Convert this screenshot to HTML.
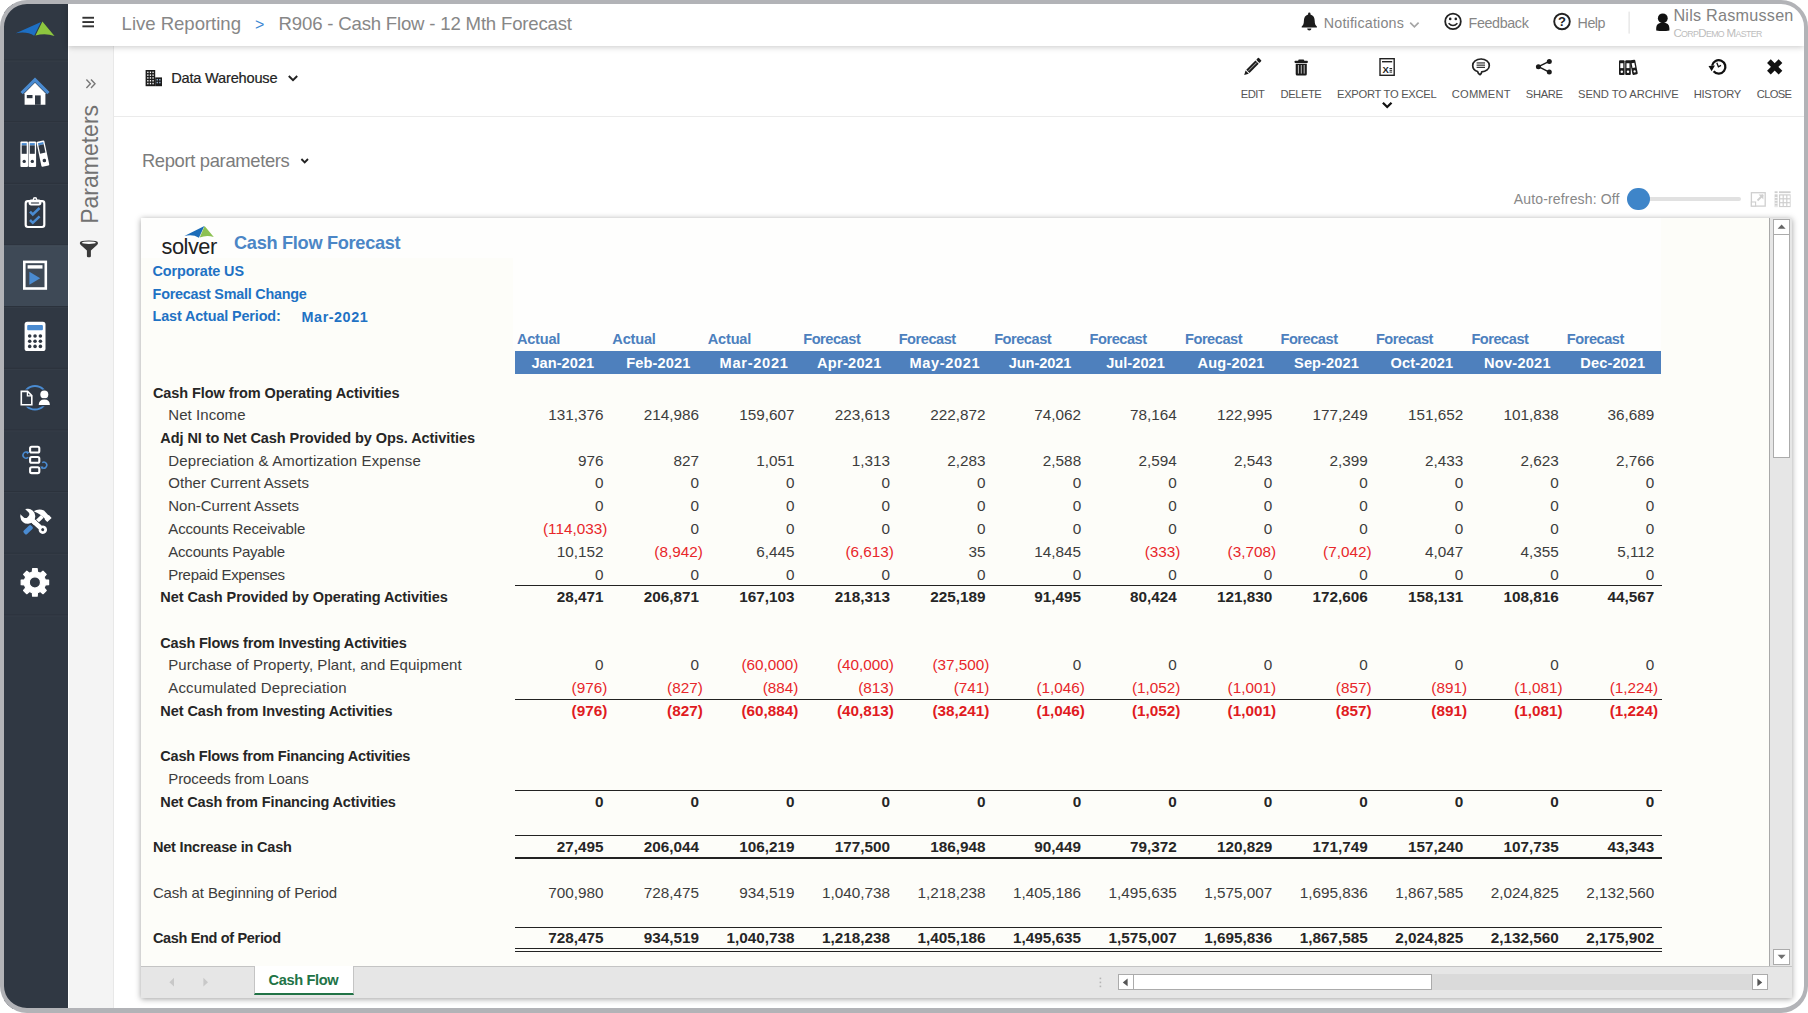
<!DOCTYPE html>
<html lang="en"><head><meta charset="utf-8"><title>R906 - Cash Flow - 12 Mth Forecast</title>
<style>
html,body{margin:0;padding:0;background:#fff;overflow:hidden;}
#page{position:relative;width:1808px;height:1013px;overflow:hidden;background:#fff;font-family:'Liberation Sans',sans-serif;}
#page div,#page svg{position:absolute;}
.t{white-space:nowrap;z-index:5;}
#frame{left:0;top:0;width:1808px;height:1013px;box-sizing:border-box;border:4px solid #b2b3b7;border-bottom-width:5px;border-right-width:4.5px;border-radius:27px;box-shadow:0 0 0 40px #fff;z-index:50;pointer-events:none;}
#side{left:4px;top:4px;width:64.2px;height:1005px;background:#303843;z-index:3;}
#active{left:4px;top:245.3px;width:64.2px;height:60.9px;background:#3e4956;z-index:3;}
#topbar{left:68.4px;top:4px;width:1736px;height:42px;background:#fff;box-shadow:0 1px 6px rgba(0,0,0,.22);z-index:4;}
#params{left:69.4px;top:46px;width:43.6px;height:963px;background:#f4f4f4;border-right:1px solid #e8e8e8;z-index:2;}
#tbline{left:113px;top:116px;width:1691px;height:1px;background:#ebebeb;}
#card{left:140.5px;top:217.5px;width:1651px;height:780.5px;background:#fdfdf9;box-shadow:0 1px 6px rgba(0,0,0,.38);z-index:1;}
#hdr{left:515.4px;top:350.7px;width:1145.4px;height:23.2px;background:#4e80bd;z-index:2;}
.ln{background:#222;height:1px;left:515px;width:1147px;z-index:2;}
#vsb{left:1768.5px;top:217.5px;width:23px;height:748.5px;background:#e6e6e6;border-left:1.5px solid #a9a9a9;box-sizing:border-box;z-index:2;}
#botbar{left:140.5px;top:965.5px;width:1651px;height:32.5px;background:#e6e6e6;border-top:1px solid #c4c4c4;box-sizing:border-box;z-index:2;}
.sbtn{background:#fff;border:1px solid #ababab;box-sizing:border-box;z-index:3;}
#tab{left:253.6px;top:965.5px;width:100.8px;height:29px;background:#fff;border-left:1px solid #c4c4c4;border-right:1px solid #c4c4c4;border-bottom:2.4px solid #217346;box-sizing:border-box;z-index:3;}
#hsb{left:1117.5px;top:974.3px;width:650px;height:16px;background:#dadada;z-index:3;}
#ptext{left:0;top:0;transform-origin:0 0;white-space:nowrap;color:#727272;z-index:5;}
#icons{left:0;top:0;z-index:6;}
#track{left:1638px;top:196.8px;width:102.5px;height:4.6px;border-radius:2.3px;background:#e1e1e1;}
#knob{left:1627.3px;top:187.7px;width:22.6px;height:22.6px;border-radius:50%;background:#3e85c9;}

</style></head>
<body>
<div id="page">
<div id="side"></div><div id="active"></div><div id="topbar"></div><div id="params"></div><div id="tbline"></div>
<div id="card"></div><div style="left:140.5px;top:217.5px;width:1520px;height:40px;background:#fefefd;z-index:1"></div><div style="left:513px;top:257px;width:1148px;height:93px;background:#fefefd;z-index:1"></div><div id="hdr"></div>
<div class="ln" style="top:585.2px;height:1px"></div>
<div class="ln" style="top:698.9px;height:1px"></div>
<div class="ln" style="top:789.9px;height:1px"></div>
<div class="ln" style="top:835.4px;height:1px"></div>
<div class="ln" style="top:856.9px;height:2.3px"></div>
<div class="ln" style="top:926.5px;height:1px"></div>
<div class="ln" style="top:948.3px;height:1.2px"></div>
<div class="ln" style="top:950.5px;height:1.5px"></div>
<div id="vsb"></div><div id="botbar"></div><div id="tab"></div><div id="hsb"></div>
<div class="sbtn" style="left:1773.3px;top:219.2px;width:16.6px;height:15.6px"></div>
<div class="sbtn" style="left:1773.3px;top:234.8px;width:16.6px;height:223.2px;border-top:none"></div>
<div class="sbtn" style="left:1773.3px;top:948.6px;width:16.6px;height:16px"></div>
<div class="sbtn" style="left:1117.5px;top:974.3px;width:16px;height:16px"></div>
<div class="sbtn" style="left:1133.5px;top:974.3px;width:298.5px;height:16px;border-left:none"></div>
<div class="sbtn" style="left:1751.5px;top:974.3px;width:16px;height:16px"></div>
<div id="track"></div><div id="knob"></div>
<div id="ptext" style="font-size:23px;line-height:26px;transform:translate(77.4px,223.8px) rotate(-90deg);">Parameters</div>
<svg id="icons" width="1808" height="1013" viewBox="0 0 1808 1013">
<rect x="4" y="59.5" width="64" height="1" fill="#000" opacity=".1"/><rect x="4" y="60.5" width="64" height="1" fill="#fff" opacity=".03"/>
<rect x="4" y="121.2" width="64" height="1" fill="#000" opacity=".1"/><rect x="4" y="122.2" width="64" height="1" fill="#fff" opacity=".03"/>
<rect x="4" y="182.8" width="64" height="1" fill="#000" opacity=".1"/><rect x="4" y="183.8" width="64" height="1" fill="#fff" opacity=".03"/>
<rect x="4" y="244.4" width="64" height="1" fill="#000" opacity=".1"/><rect x="4" y="245.4" width="64" height="1" fill="#fff" opacity=".03"/>
<rect x="4" y="306.1" width="64" height="1" fill="#000" opacity=".1"/><rect x="4" y="307.1" width="64" height="1" fill="#fff" opacity=".03"/>
<rect x="4" y="367.8" width="64" height="1" fill="#000" opacity=".1"/><rect x="4" y="368.8" width="64" height="1" fill="#fff" opacity=".03"/>
<rect x="4" y="429.4" width="64" height="1" fill="#000" opacity=".1"/><rect x="4" y="430.4" width="64" height="1" fill="#fff" opacity=".03"/>
<rect x="4" y="491.1" width="64" height="1" fill="#000" opacity=".1"/><rect x="4" y="492.1" width="64" height="1" fill="#fff" opacity=".03"/>
<rect x="4" y="552.7" width="64" height="1" fill="#000" opacity=".1"/><rect x="4" y="553.7" width="64" height="1" fill="#fff" opacity=".03"/>
<rect x="4" y="614.4" width="64" height="1" fill="#000" opacity=".1"/><rect x="4" y="615.4" width="64" height="1" fill="#fff" opacity=".03"/>
<path d="M15.8,33.2 L41,22 L34.2,35.8 Q27,31 15.8,33.2Z" fill="#1d6fc4"/>
<path d="M42.4,21.5 L54.5,36 Q45,32.8 35.5,35.6Z" fill="#8dc63f"/>
<polygon points="24.6,104.7 24.6,93.2 35,82.8 45.4,93.2 45.4,104.7" fill="#fff"/>
<rect x="26.8" y="95" width="5.7" height="3.2" fill="#303843"/><rect x="35" y="95.4" width="5.7" height="9.4" fill="#303843"/>
<polyline points="21.6,93.2 35,79.8 48.4,93.2" fill="none" stroke="#4a8bd1" stroke-width="3.2"/>
<g ><rect x="20.4" y="141.5" width="7.6" height="25.5" rx="1" fill="#fff"/><rect x="21.7" y="143.1" width="5.0" height="2.29" fill="#4a8bd1"/><rect x="21.7" y="145.39" width="5.0" height="8.42" fill="#303843"/><circle cx="24.2" cy="161.39" r="1.67" fill="#303843"/></g>
<g ><rect x="28.5" y="141.5" width="7.6" height="25.5" rx="1" fill="#fff"/><rect x="29.8" y="143.1" width="5.0" height="2.29" fill="#4a8bd1"/><rect x="29.8" y="145.39" width="5.0" height="8.42" fill="#303843"/><circle cx="32.3" cy="161.39" r="1.67" fill="#303843"/></g>
<g transform="rotate(-12 42.4 166.7) translate(3.2 0)"><rect x="38.4" y="141.2" width="8" height="25.5" rx="1" fill="#fff"/><rect x="39.699999999999996" y="142.79999999999998" width="5.4" height="2.29" fill="#4a8bd1"/><rect x="39.699999999999996" y="145.09" width="5.4" height="8.42" fill="#303843"/><circle cx="42.4" cy="161.09" r="1.76" fill="#303843"/></g>
<rect x="25.7" y="201.2" width="18.6" height="25.8" rx="2.2" fill="none" stroke="#fff" stroke-width="2.2"/>
<rect x="28.6" y="199.6" width="12.8" height="5.8" rx="2.6" fill="#fff"/><circle cx="35" cy="199.4" r="2.3" fill="#fff"/><circle cx="35" cy="199.2" r=".8" fill="#303843"/>
<rect x="30.8" y="202.3" width="8.4" height="1.5" rx=".7" fill="#303843" opacity=".75"/>
<polyline points="30,211.6 32.8,214.4 39.6,208" fill="none" stroke="#4a8bd1" stroke-width="2.5"/>
<polyline points="30,220 32.8,222.8 39.6,216.4" fill="none" stroke="#4a8bd1" stroke-width="2.5"/>
<rect x="24.3" y="261.9" width="21.5" height="26.6" fill="none" stroke="#fff" stroke-width="2.6"/>
<rect x="27.6" y="265.2" width="14.9" height="3.4" fill="#fff"/><polygon points="29.4,271.8 40.2,278.3 29.4,284.8" fill="#4a8bd1"/>
<rect x="24.6" y="321.8" width="20.9" height="29.2" rx="2.6" fill="#fff"/><rect x="27.2" y="325" width="15.7" height="5.2" rx="1" fill="#4a8bd1"/>
<circle cx="29.7" cy="336" r="1.8" fill="#303843"/>
<circle cx="29.7" cy="341.2" r="1.8" fill="#303843"/>
<circle cx="29.7" cy="346.4" r="1.8" fill="#303843"/>
<circle cx="35.05" cy="336" r="1.8" fill="#303843"/>
<circle cx="35.05" cy="341.2" r="1.8" fill="#303843"/>
<circle cx="35.05" cy="346.4" r="1.8" fill="#303843"/>
<circle cx="40.4" cy="336" r="1.8" fill="#303843"/>
<circle cx="40.4" cy="341.2" r="1.8" fill="#303843"/>
<circle cx="40.4" cy="346.4" r="1.8" fill="#303843"/>
<circle cx="35" cy="397.8" r="11.8" fill="none" stroke="#4a8bd1" stroke-width="2"/>
<path d="M21.3,391.4 h6.3 l4.2,4.2 v9.2 h-10.5z" fill="#303843" stroke="#303843" stroke-width="4"/>
<path d="M21.3,391.4 h6.3 l4.2,4.2 v9.2 h-10.5z" fill="#303843" stroke="#fff" stroke-width="1.6"/><path d="M27.4,391.6 v4.2 h4.2" fill="none" stroke="#fff" stroke-width="1.3"/>
<g stroke="#303843" stroke-width="2.4" paint-order="stroke" fill="#fff"><circle cx="44.3" cy="394.5" r="4"/><path d="M38.7,405 q0,-5.6 5.6,-5.6 q5.6,0 5.6,5.6z"/></g>
<rect x="30.1" y="446.7" width="9.2" height="5.8" rx="1.6" fill="none" stroke="#fff" stroke-width="2.1"/>
<rect x="30.1" y="457" width="9.2" height="5.8" rx="1.6" fill="none" stroke="#fff" stroke-width="2.1"/>
<rect x="30.1" y="467.3" width="9.2" height="5.8" rx="1.6" fill="none" stroke="#fff" stroke-width="2.1"/>
<path d="M27.6,452.6 a3,3 0 1 0 0.6,4.6" fill="none" stroke="#4a8bd1" stroke-width="1.5"/><polygon points="26.4,451 29.6,452.2 27,454.4" fill="#4a8bd1"/>
<path d="M42.2,462.6 a3,3 0 1 1 -0.4,4.8" fill="none" stroke="#4a8bd1" stroke-width="1.5"/><polygon points="40.2,466.6 43.4,466.4 42.2,469.6" fill="#4a8bd1"/>
<g transform="translate(41.6,517) rotate(136.4)"><rect x="-1" y="-1.9" width="9" height="3.8" fill="#fff"/><rect x="13.4" y="-2.4" width="10.4" height="4.8" rx="1.6" fill="#4a8bd1"/><path d="M-6.6,-7.6 L-0.6,-7.6 L-0.6,-4.2 L-1.2,-3 L-0.6,2.5 Q0,6.5 2,9.8 Q-4.4,8.4 -6.2,3 L-6.2,-3 L-6.6,-4Z" fill="#fff"/></g>
<g transform="translate(27.8,516.3) rotate(41.9)"><g fill="#fff" stroke="#303843" stroke-width="1.3" paint-order="stroke"><path d="M0,-2.4 H16.75 A4.2,4.2 0 1 1 16.75,2.4 H0Z"/><circle cx="0" cy="0" r="7.5"/></g><rect x="0" y="-2.3" width="10" height="4.6" fill="#fff"/><rect x="-11" y="-3.5" width="11.4" height="7" rx="3" fill="#303843"/><circle cx="20" cy="0" r="1.5" fill="#303843"/></g>
<path d="M45.28,579.82 L48.61,580.12 L48.61,584.68 L45.28,584.98 L44.07,587.92 L46.21,590.48 L42.98,593.71 L40.42,591.57 L37.48,592.78 L37.18,596.11 L32.62,596.11 L32.32,592.78 L29.38,591.57 L26.82,593.71 L23.59,590.48 L25.73,587.92 L24.52,584.98 L21.19,584.68 L21.19,580.12 L24.52,579.82 L25.73,576.88 L23.59,574.32 L26.82,571.09 L29.38,573.23 L32.32,572.02 L32.62,568.69 L37.18,568.69 L37.48,572.02 L40.42,573.23 L42.98,571.09 L46.21,574.32 L44.07,576.88Z M40.50,582.40 A5.6,5.6 0 1 0 29.30,582.40 A5.6,5.6 0 1 0 40.50,582.40Z" fill="#fff" fill-rule="evenodd" stroke="#fff" stroke-width="1.2" stroke-linejoin="round"/>
<rect x="82.4" y="16.8" width="11.6" height="1.9" fill="#333"/>
<rect x="82.4" y="21.1" width="11.6" height="1.9" fill="#333"/>
<rect x="82.4" y="25.4" width="11.6" height="1.9" fill="#333"/>
<path d="M1309.3,12.6 a1.2,1.2 0 0 1 1.2,1.2 v.6 c3,.8 4.2,3.4 4.2,6.4 c0,3.2 .8,4.6 2.2,5.8 v.9 h-15.2 v-.9 c1.4,-1.2 2.200,-2.6 2.200,-5.800 c0,-3 1.200,-5.600 4.200,-6.400 v-.6 a1.2,1.2 0 0 1 1.200,-1.200z" fill="#1b1b1b"/><path d="M1307.2,28.400 h4.200 a2.100,2.100 0 0 1 -4.200,0z" fill="#1b1b1b"/>
<polyline points="1410.2,22.700 1414.400,26.800 1418.600,22.700" fill="none" stroke="#a5a5a5" stroke-width="1.7"/>
<circle cx="1453" cy="21.400" r="7.8" fill="none" stroke="#222" stroke-width="1.8"/><circle cx="1450.200" cy="18.900" r="1.300" fill="#222"/><circle cx="1455.8" cy="18.900" r="1.300" fill="#222"/><path d="M1448.600,23.200 q4.400,4.600 8.800,0" fill="none" stroke="#222" stroke-width="1.5"/>
<circle cx="1562" cy="21.500" r="7.8" fill="none" stroke="#222" stroke-width="1.9"/><text x="1562" y="26.200" text-anchor="middle" font-family="Liberation Sans, sans-serif" font-weight="700" font-size="13" fill="#222">?</text>
<rect x="1628.6" y="11.6" width="1" height="22" fill="#dcdcdc"/>
<circle cx="1662.8" cy="18.300" r="4.900" fill="#111"/><path d="M1656.200,30.500 v-2.600 q0,-5.200 6.600,-5.200 q6.600,0 6.600,5.200 v2.600 q-6.600,1.200 -13.200,0z" fill="#111"/>
<polyline points="86.4,79.6 90.4,83.8 86.4,88" fill="none" stroke="#777" stroke-width="1.4"/><polyline points="91,79.6 95,83.8 91,88" fill="none" stroke="#777" stroke-width="1.4"/>
<path d="M79.800,243 q0,-2.400 9.100,-2.400 q9.100,0 9.100,2.400 q0,1.200 -1,2 l-6.100,5.600 v5.400 q0,1.200 -1.200,1.200 h-1.600 q-1.200,0 -1.200,-1.200 v-5.400 l-6.100,-5.600 q-1,-.8 -1,-2z" fill="#3a3a3a"/><ellipse cx="88.9" cy="242.700" rx="7" ry="1.300" fill="#fff"/>
<rect x="145.6" y="70" width="9.6" height="16.2" fill="#1b1b1b"/><rect x="155.2" y="77.400" width="6.800" height="8.800" fill="#1b1b1b"/>
<rect x="147.2" y="71.6" width="1.3" height="1.5" fill="#fff"/>
<rect x="147.2" y="74.4" width="1.3" height="1.5" fill="#fff"/>
<rect x="147.2" y="77.2" width="1.3" height="1.5" fill="#fff"/>
<rect x="147.2" y="80" width="1.3" height="1.5" fill="#fff"/>
<rect x="147.2" y="82.8" width="1.3" height="1.5" fill="#fff"/>
<rect x="149.8" y="71.6" width="1.3" height="1.5" fill="#fff"/>
<rect x="149.8" y="74.4" width="1.3" height="1.5" fill="#fff"/>
<rect x="149.8" y="77.2" width="1.3" height="1.5" fill="#fff"/>
<rect x="149.8" y="80" width="1.3" height="1.5" fill="#fff"/>
<rect x="149.8" y="82.8" width="1.3" height="1.5" fill="#fff"/>
<rect x="152.4" y="71.6" width="1.3" height="1.5" fill="#fff"/>
<rect x="152.4" y="74.4" width="1.3" height="1.5" fill="#fff"/>
<rect x="152.4" y="77.2" width="1.3" height="1.5" fill="#fff"/>
<rect x="152.4" y="80" width="1.3" height="1.5" fill="#fff"/>
<rect x="152.4" y="82.8" width="1.3" height="1.5" fill="#fff"/>
<rect x="156.6" y="79" width="1.3" height="1.5" fill="#9db8d6"/>
<rect x="156.6" y="81.8" width="1.3" height="1.5" fill="#9db8d6"/>
<rect x="159.2" y="79" width="1.3" height="1.5" fill="#9db8d6"/>
<rect x="159.2" y="81.8" width="1.3" height="1.5" fill="#9db8d6"/>
<polyline points="288.8,76 293,80.200 297.200,76" fill="none" stroke="#222" stroke-width="2"/>
<polyline points="301.4,159 304.7,162.300 308,159" fill="none" stroke="#222" stroke-width="1.9"/>
<g transform="translate(1244.2,75) rotate(-45)"><polygon points="0,0 4.200,-2.300 4.200,2.300" fill="#1b1b1b"/><rect x="5.200" y="-2.300" width="13" height="4.600" fill="#1b1b1b"/><rect x="6" y="-.5" width="11.400" height="1" fill="#fff" opacity=".55"/><rect x="19.200" y="-2.300" width="3.200" height="4.600" rx=".8" fill="#1b1b1b"/></g>
<rect x="1294.7" y="60.800" width="13" height="2.300" rx=".5" fill="#1b1b1b"/><rect x="1298.2" y="59.600" width="6" height="2.200" rx="1" fill="#1b1b1b"/><path d="M1295.7,63.800 h11.100 v10.200 q0,1.500 -1.500,1.500 h-8.100 q-1.500,0 -1.500,-1.500z" fill="#1b1b1b"/>
<rect x="1297.9" y="65" width=".9" height="8.600" fill="#fff" opacity=".8"/>
<rect x="1300.8" y="65" width=".9" height="8.600" fill="#fff" opacity=".8"/>
<rect x="1303.7" y="65" width=".9" height="8.600" fill="#fff" opacity=".8"/>
<rect x="1380" y="58.700" width="14.200" height="16.600" fill="none" stroke="#222" stroke-width="1.4"/><rect x="1382" y="61" width="10.200" height="1.400" fill="#222"/>
<text x="1382.4" y="72.800" font-family="Liberation Sans, sans-serif" font-weight="700" font-size="9.500" fill="#222">X</text><rect x="1389.5" y="68" width="2.600" height="1" fill="#222"/><rect x="1389.5" y="69.800" width="2.600" height="1" fill="#222"/><rect x="1389.5" y="71.600" width="2.600" height="1" fill="#222"/>
<polyline points="1382.9,102.800 1387.200,107 1391.500,102.800" fill="none" stroke="#111" stroke-width="2.300"/>
<path d="M1481,59 c4.700,0 8.300,2.900 8.300,6.400 c0,3.500 -3.300,6.200 -7.600,6.400 c0,1.300 -.6,2.200 -1.700,2.900 c-1,-.4 -2,-1.400 -2.400,-3.200 c-2.900,-1 -4.900,-3.400 -4.900,-6.100 c0,-3.500 3.600,-6.400 8.300,-6.400z" fill="none" stroke="#222" stroke-width="1.7" stroke-linejoin="round"/>
<rect x="1476.6" y="62.4" width="8.400" height="1.100" fill="#222"/>
<rect x="1476.6" y="64.6" width="8.400" height="1.100" fill="#222"/>
<rect x="1476.6" y="66.8" width="8.400" height="1.100" fill="#222"/>
<g fill="#1b1b1b" stroke="#1b1b1b"><line x1="1538.5" y1="66.700" x2="1549.200" y2="61.400" stroke-width="1.500"/><line x1="1538.5" y1="66.700" x2="1549.200" y2="72.100" stroke-width="1.500"/><circle cx="1538.4" cy="66.700" r="2.500" stroke="none"/><circle cx="1549.3" cy="61.500" r="2.500" stroke="none"/><circle cx="1549.3" cy="72" r="2.500" stroke="none"/></g>
<g ><rect x="1619" y="60.3" width="5.6" height="14.8" rx="1" fill="#1b1b1b"/><rect x="1620.3" y="61.9" width="2.9999999999999996" height="1.33" fill="#1b1b1b"/><rect x="1620.3" y="63.23" width="2.9999999999999996" height="4.88" fill="#fff"/><circle cx="1621.8" cy="71.84" r="1.23" fill="#fff"/></g>
<g ><rect x="1625.2" y="60.3" width="5.6" height="14.8" rx="1" fill="#1b1b1b"/><rect x="1626.5" y="61.9" width="2.9999999999999996" height="1.33" fill="#1b1b1b"/><rect x="1626.5" y="63.23" width="2.9999999999999996" height="4.88" fill="#fff"/><circle cx="1628.0" cy="71.84" r="1.23" fill="#fff"/></g>
<g transform="rotate(-11 1634 75) translate(2 0)"><rect x="1630.6" y="60" width="5.4" height="14.8" rx="1" fill="#1b1b1b"/><rect x="1631.8999999999999" y="61.6" width="2.8000000000000003" height="1.33" fill="#1b1b1b"/><rect x="1631.8999999999999" y="62.93" width="2.8000000000000003" height="4.88" fill="#fff"/><circle cx="1633.3" cy="71.54" r="1.19" fill="#fff"/></g>
<path d="M1713.6,71.200 a6.700,6.700 0 1 0 -1.500,-5.600" fill="none" stroke="#111" stroke-width="2.300"/><polygon points="1708.5,65.900 1715,65.400 1711.600,71.200" fill="#111"/><polyline points="1716.8,62.800 1718.4,66.800 1721,65.400" fill="none" stroke="#111" stroke-width="1.300"/>
<line x1="1768.9" y1="61.100" x2="1780.500" y2="72.700" stroke="#111" stroke-width="5.2"/><line x1="1780.500" y1="61.100" x2="1768.9" y2="72.700" stroke="#111" stroke-width="5.2"/>
<rect x="1751.4" y="192.700" width="13.800" height="13.400" fill="none" stroke="#cfcfcf" stroke-width="1.300"/><rect x="1751.4" y="202" width="4.200" height="4.100" fill="#fff" stroke="#cfcfcf" stroke-width="1.100"/><line x1="1757.5" y1="200.500" x2="1763" y2="195" stroke="#cfcfcf" stroke-width="1.800"/><polygon points="1758.6,194.600 1763.4,194.600 1763.4,199.400" fill="#cfcfcf"/>
<g fill="#cfcfcf"><rect x="1774.6" y="191.300" width="3" height="1.800"/><rect x="1779" y="191.300" width="11.600" height="1.800"/><rect x="1774.6" y="194.300" width="3" height="12.800"/><rect x="1779" y="194.300" width="11.600" height="12.800"/></g>
<rect x="1780.2" y="195.5" width="2.400" height="2.700" fill="#fff"/>
<rect x="1780.2" y="199.4" width="2.400" height="2.700" fill="#fff"/>
<rect x="1780.2" y="203.3" width="2.400" height="2.700" fill="#fff"/>
<rect x="1783.8" y="195.5" width="2.400" height="2.700" fill="#fff"/>
<rect x="1783.8" y="199.4" width="2.400" height="2.700" fill="#fff"/>
<rect x="1783.8" y="203.3" width="2.400" height="2.700" fill="#fff"/>
<rect x="1787.4" y="195.5" width="2.400" height="2.700" fill="#fff"/>
<rect x="1787.4" y="199.4" width="2.400" height="2.700" fill="#fff"/>
<rect x="1787.4" y="203.3" width="2.400" height="2.700" fill="#fff"/>
<rect x="1774.6" y="197.0" width="3" height=".8" fill="#fff"/>
<rect x="1774.6" y="199.9" width="3" height=".8" fill="#fff"/>
<rect x="1774.6" y="202.8" width="3" height=".8" fill="#fff"/>
<rect x="1774.6" y="205.7" width="3" height=".8" fill="#fff"/>
<path d="M184.4,236.100 L204.400,226.100 L198.900,237.700 Q192.500,234 184.400,236.100Z" fill="#1b6cb8"/><path d="M204.600,226 L213.800,237 Q206.600,234.700 199.700,237.500Z" fill="#8cc152"/>
<polygon points="1777.6,228.800 1785.600,228.800 1781.600,224.600" fill="#666"/>
<polygon points="1777.6,954.800 1785.600,954.800 1781.600,959" fill="#707070"/>
<polygon points="1127.6,978.500 1127.6,986.300 1122.800,982.400" fill="#555"/>
<polygon points="1757.4,978.500 1757.400,986.300 1762.200,982.400" fill="#555"/>
<polygon points="174,977.800 174,986.600 169.400,982.200" fill="#c8c8c8"/><polygon points="203.400,977.800 203.400,986.600 208,982.200" fill="#c8c8c8"/>
<rect x="1099.6" y="977.6" width="1.6" height="1.6" fill="#b5b5b5"/>
<rect x="1099.6" y="981.6" width="1.6" height="1.6" fill="#b5b5b5"/>
<rect x="1099.6" y="985.6" width="1.6" height="1.6" fill="#b5b5b5"/>
</svg>
<div class="t" style="left:121.60px;top:12px;font-size:18.6px;line-height:24px;color:#878787;letter-spacing:-0.039px;">Live Reporting</div>
<div class="t" style="left:255.03px;top:14px;font-size:16px;line-height:21px;color:#3b87d3;">&gt;</div>
<div class="t" style="left:278.60px;top:12px;font-size:18.6px;line-height:24px;color:#878787;letter-spacing:-0.190px;">R906 - Cash Flow - 12 Mth Forecast</div>
<div class="t" style="left:1323.80px;top:14px;font-size:14.3px;line-height:19px;color:#868686;letter-spacing:0.177px;">Notifications</div>
<div class="t" style="left:1468.50px;top:14px;font-size:14.3px;line-height:19px;color:#868686;letter-spacing:-0.357px;">Feedback</div>
<div class="t" style="left:1577.60px;top:14px;font-size:14.3px;line-height:19px;color:#868686;letter-spacing:-0.502px;">Help</div>
<div class="t" style="left:1673.40px;top:5px;font-size:16.2px;line-height:21px;color:#828282;letter-spacing:0.234px;">Nils Rasmussen</div>
<div class="t" style="left:1673.40px;top:26px;font-size:11.5px;line-height:15px;color:#bdbdbd;letter-spacing:-0.634px;">C<span style="font-size:8.8px">ORP</span>D<span style="font-size:8.8px">EMO</span> M<span style="font-size:8.8px">ASTER</span></div>
<div class="t" style="left:171.20px;top:69px;font-size:14.6px;line-height:19px;color:#222;letter-spacing:-0.198px;-webkit-text-stroke:0.2px #222;">Data Warehouse</div>
<div class="t" style="left:1240.80px;top:87px;font-size:11.2px;line-height:15px;color:#555;letter-spacing:-0.495px;">EDIT</div>
<div class="t" style="left:1280.60px;top:87px;font-size:11.2px;line-height:15px;color:#555;letter-spacing:-0.466px;">DELETE</div>
<div class="t" style="left:1337.00px;top:87px;font-size:11.2px;line-height:15px;color:#555;letter-spacing:-0.281px;">EXPORT TO EXCEL</div>
<div class="t" style="left:1451.80px;top:87px;font-size:11.2px;line-height:15px;color:#555;letter-spacing:0.151px;">COMMENT</div>
<div class="t" style="left:1525.80px;top:87px;font-size:11.2px;line-height:15px;color:#555;letter-spacing:-0.337px;">SHARE</div>
<div class="t" style="left:1578.00px;top:87px;font-size:11.2px;line-height:15px;color:#555;letter-spacing:-0.068px;">SEND TO ARCHIVE</div>
<div class="t" style="left:1693.70px;top:87px;font-size:11.2px;line-height:15px;color:#555;letter-spacing:-0.288px;">HISTORY</div>
<div class="t" style="left:1756.80px;top:87px;font-size:11.2px;line-height:15px;color:#555;letter-spacing:-0.684px;">CLOSE</div>
<div class="t" style="left:141.90px;top:149px;font-size:18.4px;line-height:24px;color:#7c7c7c;letter-spacing:-0.339px;">Report parameters</div>
<div class="t" style="left:1513.80px;top:190px;font-size:14px;line-height:18px;color:#888;letter-spacing:0.154px;">Auto-refresh: Off</div>
<div class="t" style="left:161.60px;top:233px;font-size:21.8px;line-height:28px;color:#222;letter-spacing:-0.511px;">solver</div>
<div class="t" style="left:234.00px;top:231px;font-size:18.2px;line-height:24px;color:#4b86c6;font-weight:700;letter-spacing:-0.302px;">Cash Flow Forecast</div>
<div class="t" style="left:152.60px;top:262px;font-size:14.4px;line-height:19px;color:#1f72c4;font-weight:700;letter-spacing:-0.124px;">Corporate US</div>
<div class="t" style="left:152.60px;top:285px;font-size:14.4px;line-height:19px;color:#1f72c4;font-weight:700;letter-spacing:-0.248px;">Forecast Small Change</div>
<div class="t" style="left:152.60px;top:307px;font-size:14.4px;line-height:19px;color:#1f72c4;font-weight:700;letter-spacing:-0.134px;">Last Actual Period:</div>
<div class="t" style="left:301.60px;top:308px;font-size:14.4px;line-height:19px;color:#1f72c4;font-weight:700;letter-spacing:0.528px;">Mar-2021</div>
<div class="t" style="left:516.90px;top:330px;font-size:14.6px;line-height:19px;color:#4c80be;font-weight:700;letter-spacing:-0.222px;">Actual</div>
<div class="t" style="left:531.43px;top:354px;font-size:14.6px;line-height:19px;color:#fff;font-weight:700;letter-spacing:0.045px;">Jan-2021</div>
<div class="t" style="left:612.35px;top:330px;font-size:14.6px;line-height:19px;color:#4c80be;font-weight:700;letter-spacing:-0.222px;">Actual</div>
<div class="t" style="left:626.18px;top:354px;font-size:14.6px;line-height:19px;color:#fff;font-weight:700;letter-spacing:0.131px;">Feb-2021</div>
<div class="t" style="left:707.80px;top:330px;font-size:14.6px;line-height:19px;color:#4c80be;font-weight:700;letter-spacing:-0.222px;">Actual</div>
<div class="t" style="left:719.52px;top:354px;font-size:14.6px;line-height:19px;color:#fff;font-weight:700;letter-spacing:0.731px;">Mar-2021</div>
<div class="t" style="left:803.25px;top:330px;font-size:14.6px;line-height:19px;color:#4c80be;font-weight:700;letter-spacing:-0.478px;">Forecast</div>
<div class="t" style="left:817.08px;top:354px;font-size:14.6px;line-height:19px;color:#fff;font-weight:700;letter-spacing:0.247px;">Apr-2021</div>
<div class="t" style="left:898.70px;top:330px;font-size:14.6px;line-height:19px;color:#4c80be;font-weight:700;letter-spacing:-0.478px;">Forecast</div>
<div class="t" style="left:909.53px;top:354px;font-size:14.6px;line-height:19px;color:#fff;font-weight:700;letter-spacing:0.640px;">May-2021</div>
<div class="t" style="left:994.15px;top:330px;font-size:14.6px;line-height:19px;color:#4c80be;font-weight:700;letter-spacing:-0.478px;">Forecast</div>
<div class="t" style="left:1008.73px;top:354px;font-size:14.6px;line-height:19px;color:#fff;font-weight:700;letter-spacing:-0.083px;">Jun-2021</div>
<div class="t" style="left:1089.60px;top:330px;font-size:14.6px;line-height:19px;color:#4c80be;font-weight:700;letter-spacing:-0.478px;">Forecast</div>
<div class="t" style="left:1106.17px;top:354px;font-size:14.6px;line-height:19px;color:#fff;font-weight:700;letter-spacing:0.040px;">Jul-2021</div>
<div class="t" style="left:1185.05px;top:330px;font-size:14.6px;line-height:19px;color:#4c80be;font-weight:700;letter-spacing:-0.478px;">Forecast</div>
<div class="t" style="left:1197.62px;top:354px;font-size:14.6px;line-height:19px;color:#fff;font-weight:700;letter-spacing:0.142px;">Aug-2021</div>
<div class="t" style="left:1280.50px;top:330px;font-size:14.6px;line-height:19px;color:#4c80be;font-weight:700;letter-spacing:-0.478px;">Forecast</div>
<div class="t" style="left:1294.08px;top:354px;font-size:14.6px;line-height:19px;color:#fff;font-weight:700;letter-spacing:0.087px;">Sep-2021</div>
<div class="t" style="left:1375.95px;top:330px;font-size:14.6px;line-height:19px;color:#4c80be;font-weight:700;letter-spacing:-0.478px;">Forecast</div>
<div class="t" style="left:1390.53px;top:354px;font-size:14.6px;line-height:19px;color:#fff;font-weight:700;letter-spacing:0.149px;">Oct-2021</div>
<div class="t" style="left:1471.40px;top:330px;font-size:14.6px;line-height:19px;color:#4c80be;font-weight:700;letter-spacing:-0.478px;">Forecast</div>
<div class="t" style="left:1484.08px;top:354px;font-size:14.6px;line-height:19px;color:#fff;font-weight:700;letter-spacing:0.228px;">Nov-2021</div>
<div class="t" style="left:1566.85px;top:330px;font-size:14.6px;line-height:19px;color:#4c80be;font-weight:700;letter-spacing:-0.478px;">Forecast</div>
<div class="t" style="left:1580.37px;top:354px;font-size:14.6px;line-height:19px;color:#fff;font-weight:700;letter-spacing:0.099px;">Dec-2021</div>
<div class="t" style="left:152.90px;top:384px;font-size:14.5px;line-height:19px;color:#262626;font-weight:700;letter-spacing:-0.077px;">Cash Flow from Operating Activities</div>
<div class="t" style="left:168.30px;top:405px;font-size:15px;line-height:20px;color:#3c3c3c;letter-spacing:0.055px;">Net Income</div>
<div class="t" style="left:160.30px;top:429px;font-size:14.5px;line-height:19px;color:#262626;font-weight:700;letter-spacing:-0.065px;">Adj NI to Net Cash Provided by Ops. Activities</div>
<div class="t" style="left:168.30px;top:451px;font-size:15px;line-height:20px;color:#3c3c3c;letter-spacing:0.143px;">Depreciation &amp; Amortization Expense</div>
<div class="t" style="left:168.30px;top:473px;font-size:15px;line-height:20px;color:#3c3c3c;letter-spacing:0.028px;">Other Current Assets</div>
<div class="t" style="left:168.30px;top:496px;font-size:15px;line-height:20px;color:#3c3c3c;letter-spacing:-0.017px;">Non-Current Assets</div>
<div class="t" style="left:168.30px;top:519px;font-size:15px;line-height:20px;color:#3c3c3c;letter-spacing:-0.171px;">Accounts Receivable</div>
<div class="t" style="left:168.30px;top:542px;font-size:15px;line-height:20px;color:#3c3c3c;letter-spacing:-0.225px;">Accounts Payable</div>
<div class="t" style="left:168.30px;top:565px;font-size:15px;line-height:20px;color:#3c3c3c;letter-spacing:-0.337px;">Prepaid Expenses</div>
<div class="t" style="left:160.30px;top:588px;font-size:14.5px;line-height:19px;color:#262626;font-weight:700;letter-spacing:-0.071px;">Net Cash Provided by Operating Activities</div>
<div class="t" style="left:160.30px;top:634px;font-size:14.5px;line-height:19px;color:#262626;font-weight:700;letter-spacing:-0.171px;">Cash Flows from Investing Activities</div>
<div class="t" style="left:168.30px;top:655px;font-size:15px;line-height:20px;color:#3c3c3c;letter-spacing:0.042px;">Purchase of Property, Plant, and Equipment</div>
<div class="t" style="left:168.30px;top:678px;font-size:15px;line-height:20px;color:#3c3c3c;letter-spacing:0.135px;">Accumulated Depreciation</div>
<div class="t" style="left:160.30px;top:702px;font-size:14.5px;line-height:19px;color:#262626;font-weight:700;letter-spacing:-0.077px;">Net Cash from Investing Activities</div>
<div class="t" style="left:160.30px;top:747px;font-size:14.5px;line-height:19px;color:#262626;font-weight:700;letter-spacing:-0.206px;">Cash Flows from Financing Activities</div>
<div class="t" style="left:168.30px;top:769px;font-size:15px;line-height:20px;color:#3c3c3c;letter-spacing:-0.121px;">Proceeds from Loans</div>
<div class="t" style="left:160.30px;top:793px;font-size:14.5px;line-height:19px;color:#262626;font-weight:700;letter-spacing:-0.120px;">Net Cash from Financing Activities</div>
<div class="t" style="left:152.90px;top:838px;font-size:14.5px;line-height:19px;color:#262626;font-weight:700;letter-spacing:-0.187px;">Net Increase in Cash</div>
<div class="t" style="left:152.90px;top:883px;font-size:15px;line-height:20px;color:#3c3c3c;letter-spacing:-0.100px;">Cash at Beginning of Period</div>
<div class="t" style="left:152.90px;top:929px;font-size:14.5px;line-height:19px;color:#262626;font-weight:700;letter-spacing:-0.332px;">Cash End of Period</div>
<div class="t" style="left:548.20px;top:405px;font-size:15.3px;line-height:20px;color:#3c3c3c;">131,376</div>
<div class="t" style="left:643.73px;top:405px;font-size:15.3px;line-height:20px;color:#3c3c3c;">214,986</div>
<div class="t" style="left:739.26px;top:405px;font-size:15.3px;line-height:20px;color:#3c3c3c;">159,607</div>
<div class="t" style="left:834.79px;top:405px;font-size:15.3px;line-height:20px;color:#3c3c3c;">223,613</div>
<div class="t" style="left:930.32px;top:405px;font-size:15.3px;line-height:20px;color:#3c3c3c;">222,872</div>
<div class="t" style="left:1034.35px;top:405px;font-size:15.3px;line-height:20px;color:#3c3c3c;">74,062</div>
<div class="t" style="left:1129.88px;top:405px;font-size:15.3px;line-height:20px;color:#3c3c3c;">78,164</div>
<div class="t" style="left:1216.91px;top:405px;font-size:15.3px;line-height:20px;color:#3c3c3c;">122,995</div>
<div class="t" style="left:1312.44px;top:405px;font-size:15.3px;line-height:20px;color:#3c3c3c;">177,249</div>
<div class="t" style="left:1407.97px;top:405px;font-size:15.3px;line-height:20px;color:#3c3c3c;">151,652</div>
<div class="t" style="left:1503.50px;top:405px;font-size:15.3px;line-height:20px;color:#3c3c3c;">101,838</div>
<div class="t" style="left:1607.53px;top:405px;font-size:15.3px;line-height:20px;color:#3c3c3c;">36,689</div>
<div class="t" style="left:577.97px;top:451px;font-size:15.3px;line-height:20px;color:#3c3c3c;">976</div>
<div class="t" style="left:673.50px;top:451px;font-size:15.3px;line-height:20px;color:#3c3c3c;">827</div>
<div class="t" style="left:756.28px;top:451px;font-size:15.3px;line-height:20px;color:#3c3c3c;">1,051</div>
<div class="t" style="left:851.81px;top:451px;font-size:15.3px;line-height:20px;color:#3c3c3c;">1,313</div>
<div class="t" style="left:947.34px;top:451px;font-size:15.3px;line-height:20px;color:#3c3c3c;">2,283</div>
<div class="t" style="left:1042.87px;top:451px;font-size:15.3px;line-height:20px;color:#3c3c3c;">2,588</div>
<div class="t" style="left:1138.40px;top:451px;font-size:15.3px;line-height:20px;color:#3c3c3c;">2,594</div>
<div class="t" style="left:1233.93px;top:451px;font-size:15.3px;line-height:20px;color:#3c3c3c;">2,543</div>
<div class="t" style="left:1329.46px;top:451px;font-size:15.3px;line-height:20px;color:#3c3c3c;">2,399</div>
<div class="t" style="left:1424.99px;top:451px;font-size:15.3px;line-height:20px;color:#3c3c3c;">2,433</div>
<div class="t" style="left:1520.52px;top:451px;font-size:15.3px;line-height:20px;color:#3c3c3c;">2,623</div>
<div class="t" style="left:1616.05px;top:451px;font-size:15.3px;line-height:20px;color:#3c3c3c;">2,766</div>
<div class="t" style="left:594.98px;top:473px;font-size:15.3px;line-height:20px;color:#3c3c3c;">0</div>
<div class="t" style="left:690.51px;top:473px;font-size:15.3px;line-height:20px;color:#3c3c3c;">0</div>
<div class="t" style="left:786.04px;top:473px;font-size:15.3px;line-height:20px;color:#3c3c3c;">0</div>
<div class="t" style="left:881.57px;top:473px;font-size:15.3px;line-height:20px;color:#3c3c3c;">0</div>
<div class="t" style="left:977.10px;top:473px;font-size:15.3px;line-height:20px;color:#3c3c3c;">0</div>
<div class="t" style="left:1072.63px;top:473px;font-size:15.3px;line-height:20px;color:#3c3c3c;">0</div>
<div class="t" style="left:1168.16px;top:473px;font-size:15.3px;line-height:20px;color:#3c3c3c;">0</div>
<div class="t" style="left:1263.69px;top:473px;font-size:15.3px;line-height:20px;color:#3c3c3c;">0</div>
<div class="t" style="left:1359.22px;top:473px;font-size:15.3px;line-height:20px;color:#3c3c3c;">0</div>
<div class="t" style="left:1454.75px;top:473px;font-size:15.3px;line-height:20px;color:#3c3c3c;">0</div>
<div class="t" style="left:1550.28px;top:473px;font-size:15.3px;line-height:20px;color:#3c3c3c;">0</div>
<div class="t" style="left:1645.81px;top:473px;font-size:15.3px;line-height:20px;color:#3c3c3c;">0</div>
<div class="t" style="left:594.98px;top:496px;font-size:15.3px;line-height:20px;color:#3c3c3c;">0</div>
<div class="t" style="left:690.51px;top:496px;font-size:15.3px;line-height:20px;color:#3c3c3c;">0</div>
<div class="t" style="left:786.04px;top:496px;font-size:15.3px;line-height:20px;color:#3c3c3c;">0</div>
<div class="t" style="left:881.57px;top:496px;font-size:15.3px;line-height:20px;color:#3c3c3c;">0</div>
<div class="t" style="left:977.10px;top:496px;font-size:15.3px;line-height:20px;color:#3c3c3c;">0</div>
<div class="t" style="left:1072.63px;top:496px;font-size:15.3px;line-height:20px;color:#3c3c3c;">0</div>
<div class="t" style="left:1168.16px;top:496px;font-size:15.3px;line-height:20px;color:#3c3c3c;">0</div>
<div class="t" style="left:1263.69px;top:496px;font-size:15.3px;line-height:20px;color:#3c3c3c;">0</div>
<div class="t" style="left:1359.22px;top:496px;font-size:15.3px;line-height:20px;color:#3c3c3c;">0</div>
<div class="t" style="left:1454.75px;top:496px;font-size:15.3px;line-height:20px;color:#3c3c3c;">0</div>
<div class="t" style="left:1550.28px;top:496px;font-size:15.3px;line-height:20px;color:#3c3c3c;">0</div>
<div class="t" style="left:1645.81px;top:496px;font-size:15.3px;line-height:20px;color:#3c3c3c;">0</div>
<div class="t" style="left:542.94px;top:519px;font-size:15.3px;line-height:20px;color:#e8262a;">(114,033)</div>
<div class="t" style="left:690.51px;top:519px;font-size:15.3px;line-height:20px;color:#3c3c3c;">0</div>
<div class="t" style="left:786.04px;top:519px;font-size:15.3px;line-height:20px;color:#3c3c3c;">0</div>
<div class="t" style="left:881.57px;top:519px;font-size:15.3px;line-height:20px;color:#3c3c3c;">0</div>
<div class="t" style="left:977.10px;top:519px;font-size:15.3px;line-height:20px;color:#3c3c3c;">0</div>
<div class="t" style="left:1072.63px;top:519px;font-size:15.3px;line-height:20px;color:#3c3c3c;">0</div>
<div class="t" style="left:1168.16px;top:519px;font-size:15.3px;line-height:20px;color:#3c3c3c;">0</div>
<div class="t" style="left:1263.69px;top:519px;font-size:15.3px;line-height:20px;color:#3c3c3c;">0</div>
<div class="t" style="left:1359.22px;top:519px;font-size:15.3px;line-height:20px;color:#3c3c3c;">0</div>
<div class="t" style="left:1454.75px;top:519px;font-size:15.3px;line-height:20px;color:#3c3c3c;">0</div>
<div class="t" style="left:1550.28px;top:519px;font-size:15.3px;line-height:20px;color:#3c3c3c;">0</div>
<div class="t" style="left:1645.81px;top:519px;font-size:15.3px;line-height:20px;color:#3c3c3c;">0</div>
<div class="t" style="left:556.70px;top:542px;font-size:15.3px;line-height:20px;color:#3c3c3c;">10,152</div>
<div class="t" style="left:654.36px;top:542px;font-size:15.3px;line-height:20px;color:#e8262a;">(8,942)</div>
<div class="t" style="left:756.28px;top:542px;font-size:15.3px;line-height:20px;color:#3c3c3c;">6,445</div>
<div class="t" style="left:845.42px;top:542px;font-size:15.3px;line-height:20px;color:#e8262a;">(6,613)</div>
<div class="t" style="left:968.60px;top:542px;font-size:15.3px;line-height:20px;color:#3c3c3c;">35</div>
<div class="t" style="left:1034.35px;top:542px;font-size:15.3px;line-height:20px;color:#3c3c3c;">14,845</div>
<div class="t" style="left:1144.76px;top:542px;font-size:15.3px;line-height:20px;color:#e8262a;">(333)</div>
<div class="t" style="left:1227.54px;top:542px;font-size:15.3px;line-height:20px;color:#e8262a;">(3,708)</div>
<div class="t" style="left:1323.07px;top:542px;font-size:15.3px;line-height:20px;color:#e8262a;">(7,042)</div>
<div class="t" style="left:1424.99px;top:542px;font-size:15.3px;line-height:20px;color:#3c3c3c;">4,047</div>
<div class="t" style="left:1520.52px;top:542px;font-size:15.3px;line-height:20px;color:#3c3c3c;">4,355</div>
<div class="t" style="left:1617.17px;top:542px;font-size:15.3px;line-height:20px;color:#3c3c3c;">5,112</div>
<div class="t" style="left:594.98px;top:565px;font-size:15.3px;line-height:20px;color:#3c3c3c;">0</div>
<div class="t" style="left:690.51px;top:565px;font-size:15.3px;line-height:20px;color:#3c3c3c;">0</div>
<div class="t" style="left:786.04px;top:565px;font-size:15.3px;line-height:20px;color:#3c3c3c;">0</div>
<div class="t" style="left:881.57px;top:565px;font-size:15.3px;line-height:20px;color:#3c3c3c;">0</div>
<div class="t" style="left:977.10px;top:565px;font-size:15.3px;line-height:20px;color:#3c3c3c;">0</div>
<div class="t" style="left:1072.63px;top:565px;font-size:15.3px;line-height:20px;color:#3c3c3c;">0</div>
<div class="t" style="left:1168.16px;top:565px;font-size:15.3px;line-height:20px;color:#3c3c3c;">0</div>
<div class="t" style="left:1263.69px;top:565px;font-size:15.3px;line-height:20px;color:#3c3c3c;">0</div>
<div class="t" style="left:1359.22px;top:565px;font-size:15.3px;line-height:20px;color:#3c3c3c;">0</div>
<div class="t" style="left:1454.75px;top:565px;font-size:15.3px;line-height:20px;color:#3c3c3c;">0</div>
<div class="t" style="left:1550.28px;top:565px;font-size:15.3px;line-height:20px;color:#3c3c3c;">0</div>
<div class="t" style="left:1645.81px;top:565px;font-size:15.3px;line-height:20px;color:#3c3c3c;">0</div>
<div class="t" style="left:556.70px;top:587px;font-size:15.3px;line-height:20px;color:#262626;font-weight:700;">28,471</div>
<div class="t" style="left:643.73px;top:587px;font-size:15.3px;line-height:20px;color:#262626;font-weight:700;">206,871</div>
<div class="t" style="left:739.26px;top:587px;font-size:15.3px;line-height:20px;color:#262626;font-weight:700;">167,103</div>
<div class="t" style="left:834.79px;top:587px;font-size:15.3px;line-height:20px;color:#262626;font-weight:700;">218,313</div>
<div class="t" style="left:930.32px;top:587px;font-size:15.3px;line-height:20px;color:#262626;font-weight:700;">225,189</div>
<div class="t" style="left:1034.35px;top:587px;font-size:15.3px;line-height:20px;color:#262626;font-weight:700;">91,495</div>
<div class="t" style="left:1129.88px;top:587px;font-size:15.3px;line-height:20px;color:#262626;font-weight:700;">80,424</div>
<div class="t" style="left:1216.91px;top:587px;font-size:15.3px;line-height:20px;color:#262626;font-weight:700;">121,830</div>
<div class="t" style="left:1312.44px;top:587px;font-size:15.3px;line-height:20px;color:#262626;font-weight:700;">172,606</div>
<div class="t" style="left:1407.97px;top:587px;font-size:15.3px;line-height:20px;color:#262626;font-weight:700;">158,131</div>
<div class="t" style="left:1503.50px;top:587px;font-size:15.3px;line-height:20px;color:#262626;font-weight:700;">108,816</div>
<div class="t" style="left:1607.53px;top:587px;font-size:15.3px;line-height:20px;color:#262626;font-weight:700;">44,567</div>
<div class="t" style="left:594.98px;top:655px;font-size:15.3px;line-height:20px;color:#3c3c3c;">0</div>
<div class="t" style="left:690.51px;top:655px;font-size:15.3px;line-height:20px;color:#3c3c3c;">0</div>
<div class="t" style="left:741.38px;top:655px;font-size:15.3px;line-height:20px;color:#e8262a;">(60,000)</div>
<div class="t" style="left:836.91px;top:655px;font-size:15.3px;line-height:20px;color:#e8262a;">(40,000)</div>
<div class="t" style="left:932.44px;top:655px;font-size:15.3px;line-height:20px;color:#e8262a;">(37,500)</div>
<div class="t" style="left:1072.63px;top:655px;font-size:15.3px;line-height:20px;color:#3c3c3c;">0</div>
<div class="t" style="left:1168.16px;top:655px;font-size:15.3px;line-height:20px;color:#3c3c3c;">0</div>
<div class="t" style="left:1263.69px;top:655px;font-size:15.3px;line-height:20px;color:#3c3c3c;">0</div>
<div class="t" style="left:1359.22px;top:655px;font-size:15.3px;line-height:20px;color:#3c3c3c;">0</div>
<div class="t" style="left:1454.75px;top:655px;font-size:15.3px;line-height:20px;color:#3c3c3c;">0</div>
<div class="t" style="left:1550.28px;top:655px;font-size:15.3px;line-height:20px;color:#3c3c3c;">0</div>
<div class="t" style="left:1645.81px;top:655px;font-size:15.3px;line-height:20px;color:#3c3c3c;">0</div>
<div class="t" style="left:571.58px;top:678px;font-size:15.3px;line-height:20px;color:#e8262a;">(976)</div>
<div class="t" style="left:667.11px;top:678px;font-size:15.3px;line-height:20px;color:#e8262a;">(827)</div>
<div class="t" style="left:762.64px;top:678px;font-size:15.3px;line-height:20px;color:#e8262a;">(884)</div>
<div class="t" style="left:858.17px;top:678px;font-size:15.3px;line-height:20px;color:#e8262a;">(813)</div>
<div class="t" style="left:953.70px;top:678px;font-size:15.3px;line-height:20px;color:#e8262a;">(741)</div>
<div class="t" style="left:1036.48px;top:678px;font-size:15.3px;line-height:20px;color:#e8262a;">(1,046)</div>
<div class="t" style="left:1132.01px;top:678px;font-size:15.3px;line-height:20px;color:#e8262a;">(1,052)</div>
<div class="t" style="left:1227.54px;top:678px;font-size:15.3px;line-height:20px;color:#e8262a;">(1,001)</div>
<div class="t" style="left:1335.82px;top:678px;font-size:15.3px;line-height:20px;color:#e8262a;">(857)</div>
<div class="t" style="left:1431.35px;top:678px;font-size:15.3px;line-height:20px;color:#e8262a;">(891)</div>
<div class="t" style="left:1514.13px;top:678px;font-size:15.3px;line-height:20px;color:#e8262a;">(1,081)</div>
<div class="t" style="left:1609.66px;top:678px;font-size:15.3px;line-height:20px;color:#e8262a;">(1,224)</div>
<div class="t" style="left:571.58px;top:701px;font-size:15.3px;line-height:20px;color:#e01b1f;font-weight:700;">(976)</div>
<div class="t" style="left:667.11px;top:701px;font-size:15.3px;line-height:20px;color:#e01b1f;font-weight:700;">(827)</div>
<div class="t" style="left:741.38px;top:701px;font-size:15.3px;line-height:20px;color:#e01b1f;font-weight:700;">(60,884)</div>
<div class="t" style="left:836.91px;top:701px;font-size:15.3px;line-height:20px;color:#e01b1f;font-weight:700;">(40,813)</div>
<div class="t" style="left:932.44px;top:701px;font-size:15.3px;line-height:20px;color:#e01b1f;font-weight:700;">(38,241)</div>
<div class="t" style="left:1036.48px;top:701px;font-size:15.3px;line-height:20px;color:#e01b1f;font-weight:700;">(1,046)</div>
<div class="t" style="left:1132.01px;top:701px;font-size:15.3px;line-height:20px;color:#e01b1f;font-weight:700;">(1,052)</div>
<div class="t" style="left:1227.54px;top:701px;font-size:15.3px;line-height:20px;color:#e01b1f;font-weight:700;">(1,001)</div>
<div class="t" style="left:1335.82px;top:701px;font-size:15.3px;line-height:20px;color:#e01b1f;font-weight:700;">(857)</div>
<div class="t" style="left:1431.35px;top:701px;font-size:15.3px;line-height:20px;color:#e01b1f;font-weight:700;">(891)</div>
<div class="t" style="left:1514.13px;top:701px;font-size:15.3px;line-height:20px;color:#e01b1f;font-weight:700;">(1,081)</div>
<div class="t" style="left:1609.66px;top:701px;font-size:15.3px;line-height:20px;color:#e01b1f;font-weight:700;">(1,224)</div>
<div class="t" style="left:594.98px;top:792px;font-size:15.3px;line-height:20px;color:#262626;font-weight:700;">0</div>
<div class="t" style="left:690.51px;top:792px;font-size:15.3px;line-height:20px;color:#262626;font-weight:700;">0</div>
<div class="t" style="left:786.04px;top:792px;font-size:15.3px;line-height:20px;color:#262626;font-weight:700;">0</div>
<div class="t" style="left:881.57px;top:792px;font-size:15.3px;line-height:20px;color:#262626;font-weight:700;">0</div>
<div class="t" style="left:977.10px;top:792px;font-size:15.3px;line-height:20px;color:#262626;font-weight:700;">0</div>
<div class="t" style="left:1072.63px;top:792px;font-size:15.3px;line-height:20px;color:#262626;font-weight:700;">0</div>
<div class="t" style="left:1168.16px;top:792px;font-size:15.3px;line-height:20px;color:#262626;font-weight:700;">0</div>
<div class="t" style="left:1263.69px;top:792px;font-size:15.3px;line-height:20px;color:#262626;font-weight:700;">0</div>
<div class="t" style="left:1359.22px;top:792px;font-size:15.3px;line-height:20px;color:#262626;font-weight:700;">0</div>
<div class="t" style="left:1454.75px;top:792px;font-size:15.3px;line-height:20px;color:#262626;font-weight:700;">0</div>
<div class="t" style="left:1550.28px;top:792px;font-size:15.3px;line-height:20px;color:#262626;font-weight:700;">0</div>
<div class="t" style="left:1645.81px;top:792px;font-size:15.3px;line-height:20px;color:#262626;font-weight:700;">0</div>
<div class="t" style="left:556.70px;top:837px;font-size:15.3px;line-height:20px;color:#262626;font-weight:700;">27,495</div>
<div class="t" style="left:643.73px;top:837px;font-size:15.3px;line-height:20px;color:#262626;font-weight:700;">206,044</div>
<div class="t" style="left:739.26px;top:837px;font-size:15.3px;line-height:20px;color:#262626;font-weight:700;">106,219</div>
<div class="t" style="left:834.79px;top:837px;font-size:15.3px;line-height:20px;color:#262626;font-weight:700;">177,500</div>
<div class="t" style="left:930.32px;top:837px;font-size:15.3px;line-height:20px;color:#262626;font-weight:700;">186,948</div>
<div class="t" style="left:1034.35px;top:837px;font-size:15.3px;line-height:20px;color:#262626;font-weight:700;">90,449</div>
<div class="t" style="left:1129.88px;top:837px;font-size:15.3px;line-height:20px;color:#262626;font-weight:700;">79,372</div>
<div class="t" style="left:1216.91px;top:837px;font-size:15.3px;line-height:20px;color:#262626;font-weight:700;">120,829</div>
<div class="t" style="left:1312.44px;top:837px;font-size:15.3px;line-height:20px;color:#262626;font-weight:700;">171,749</div>
<div class="t" style="left:1407.97px;top:837px;font-size:15.3px;line-height:20px;color:#262626;font-weight:700;">157,240</div>
<div class="t" style="left:1503.50px;top:837px;font-size:15.3px;line-height:20px;color:#262626;font-weight:700;">107,735</div>
<div class="t" style="left:1607.53px;top:837px;font-size:15.3px;line-height:20px;color:#262626;font-weight:700;">43,343</div>
<div class="t" style="left:548.20px;top:883px;font-size:15.3px;line-height:20px;color:#3c3c3c;">700,980</div>
<div class="t" style="left:643.73px;top:883px;font-size:15.3px;line-height:20px;color:#3c3c3c;">728,475</div>
<div class="t" style="left:739.26px;top:883px;font-size:15.3px;line-height:20px;color:#3c3c3c;">934,519</div>
<div class="t" style="left:822.03px;top:883px;font-size:15.3px;line-height:20px;color:#3c3c3c;">1,040,738</div>
<div class="t" style="left:917.56px;top:883px;font-size:15.3px;line-height:20px;color:#3c3c3c;">1,218,238</div>
<div class="t" style="left:1013.09px;top:883px;font-size:15.3px;line-height:20px;color:#3c3c3c;">1,405,186</div>
<div class="t" style="left:1108.62px;top:883px;font-size:15.3px;line-height:20px;color:#3c3c3c;">1,495,635</div>
<div class="t" style="left:1204.15px;top:883px;font-size:15.3px;line-height:20px;color:#3c3c3c;">1,575,007</div>
<div class="t" style="left:1299.68px;top:883px;font-size:15.3px;line-height:20px;color:#3c3c3c;">1,695,836</div>
<div class="t" style="left:1395.21px;top:883px;font-size:15.3px;line-height:20px;color:#3c3c3c;">1,867,585</div>
<div class="t" style="left:1490.74px;top:883px;font-size:15.3px;line-height:20px;color:#3c3c3c;">2,024,825</div>
<div class="t" style="left:1586.27px;top:883px;font-size:15.3px;line-height:20px;color:#3c3c3c;">2,132,560</div>
<div class="t" style="left:548.20px;top:928px;font-size:15.3px;line-height:20px;color:#262626;font-weight:700;">728,475</div>
<div class="t" style="left:643.73px;top:928px;font-size:15.3px;line-height:20px;color:#262626;font-weight:700;">934,519</div>
<div class="t" style="left:726.50px;top:928px;font-size:15.3px;line-height:20px;color:#262626;font-weight:700;">1,040,738</div>
<div class="t" style="left:822.03px;top:928px;font-size:15.3px;line-height:20px;color:#262626;font-weight:700;">1,218,238</div>
<div class="t" style="left:917.56px;top:928px;font-size:15.3px;line-height:20px;color:#262626;font-weight:700;">1,405,186</div>
<div class="t" style="left:1013.09px;top:928px;font-size:15.3px;line-height:20px;color:#262626;font-weight:700;">1,495,635</div>
<div class="t" style="left:1108.62px;top:928px;font-size:15.3px;line-height:20px;color:#262626;font-weight:700;">1,575,007</div>
<div class="t" style="left:1204.15px;top:928px;font-size:15.3px;line-height:20px;color:#262626;font-weight:700;">1,695,836</div>
<div class="t" style="left:1299.68px;top:928px;font-size:15.3px;line-height:20px;color:#262626;font-weight:700;">1,867,585</div>
<div class="t" style="left:1395.21px;top:928px;font-size:15.3px;line-height:20px;color:#262626;font-weight:700;">2,024,825</div>
<div class="t" style="left:1490.74px;top:928px;font-size:15.3px;line-height:20px;color:#262626;font-weight:700;">2,132,560</div>
<div class="t" style="left:1586.27px;top:928px;font-size:15.3px;line-height:20px;color:#262626;font-weight:700;">2,175,902</div>
<div class="t" style="left:268.50px;top:971px;font-size:14.6px;line-height:19px;color:#217346;font-weight:700;letter-spacing:-0.348px;">Cash Flow</div>
<div id="frame"></div>
</div>
</body></html>
